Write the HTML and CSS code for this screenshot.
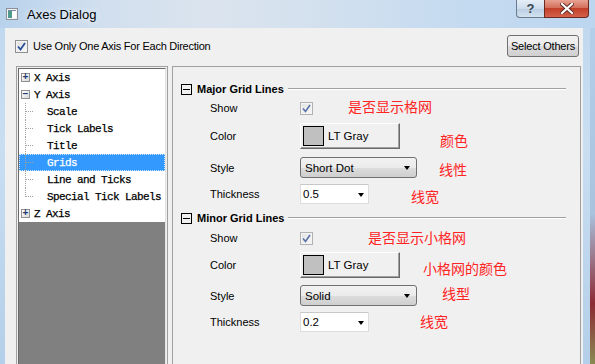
FILE: index.html
```html
<!DOCTYPE HTML>
<html>
<head>
<link rel="stylesheet" href="styles.css">
</head>
<body>
<div class="window">
  <div class="titlebar">
    <svg class="app-icon" width="12" height="12" viewBox="0 0 12 12">
      <rect x="0.5" y="0.5" width="11" height="11" fill="#f4f4f4" stroke="#8a9099"/>
      <rect x="2" y="2" width="4" height="8" fill="#4f9a8c"/>
      <rect x="6" y="2" width="4" height="8" fill="#ffffff"/>
      <rect x="2" y="2" width="8" height="1" fill="#7a8aa0"/>
    </svg>
    <span class="title">Axes Dialog</span>
    <div class="caption-buttons">
      <div class="cap-btn help">?</div>
      <div class="cap-btn close">
        <svg width="14" height="11" viewBox="0 0 14 11">
          <path d="M2 1 L12 10 M12 1 L2 10" stroke="#5a2a22" stroke-width="4" stroke-linecap="square"/>
          <path d="M2 1 L12 10 M12 1 L2 10" stroke="#ffffff" stroke-width="2.2" stroke-linecap="square"/>
        </svg>
      </div>
    </div>
  </div>
  <div class="frame-row">
    <div class="client">
      <div class="top-row">
        <div class="check-label">
          <span class="checkbox"><svg width="9" height="9" viewBox="0 0 9 9"><path d="M1 4.5 L3.5 7.5 L8 1" fill="none" stroke="#2a4f9a" stroke-width="1.8"/></svg></span>
          Use Only One Axis For Each Direction
        </div>
        <div class="btn">Select Others</div>
      </div>
      <div class="panels">
        <div class="tree">
          <div class="tree-inner">
            <div class="tree-items">
              <div class="node"><span class="expander">+</span>X Axis</div>
              <div class="node"><span class="expander">&minus;</span>Y Axis</div>
              <div class="leaf">Scale</div>
              <div class="leaf">Tick Labels</div>
              <div class="leaf">Title</div>
              <div class="leaf selected">Grids</div>
              <div class="leaf">Line and Ticks</div>
              <div class="leaf last">Special Tick Labels</div>
              <div class="node"><span class="expander">+</span>Z Axis</div>
            </div>
          </div>
        </div>
        <div class="props">
          <div class="group">
            <div class="group-head">
              <span class="collapse"></span>
              <span class="group-title">Major Grid Lines</span>
              <span class="group-line"></span>
            </div>
            <div class="row row-check">
              <span class="label">Show</span>
              <span class="checkbox disabled"><svg width="9" height="9" viewBox="0 0 9 9"><path d="M1 4.5 L3.5 7.5 L8 1" fill="none" stroke="#5a73a8" stroke-width="1.6"/></svg></span>
              <span class="note note-show1">是否显示格网</span>
            </div>
            <div class="row row-color">
              <span class="label">Color</span>
              <div class="color-btn"><span class="swatch"></span>LT Gray</div>
              <span class="note note-color1">颜色</span>
            </div>
            <div class="row row-style">
              <span class="label">Style</span>
              <div class="dropdown">Short Dot<span class="arrow"></span></div>
              <span class="note note-style1">线性</span>
            </div>
            <div class="row row-thick">
              <span class="label">Thickness</span>
              <div class="combo">0.5<span class="arrow"></span></div>
              <span class="note note-thick1">线宽</span>
            </div>
          </div>
          <div class="group group-minor">
            <div class="group-head">
              <span class="collapse"></span>
              <span class="group-title">Minor Grid Lines</span>
              <span class="group-line"></span>
            </div>
            <div class="row row-check">
              <span class="label">Show</span>
              <span class="checkbox disabled"><svg width="9" height="9" viewBox="0 0 9 9"><path d="M1 4.5 L3.5 7.5 L8 1" fill="none" stroke="#5a73a8" stroke-width="1.6"/></svg></span>
              <span class="note note-show2">是否显示小格网</span>
            </div>
            <div class="row row-color">
              <span class="label">Color</span>
              <div class="color-btn"><span class="swatch"></span>LT Gray</div>
              <span class="note note-color2">小格网的颜色</span>
            </div>
            <div class="row row-style">
              <span class="label">Style</span>
              <div class="dropdown">Solid<span class="arrow"></span></div>
              <span class="note note-style2">线型</span>
            </div>
            <div class="row row-thick">
              <span class="label">Thickness</span>
              <div class="combo">0.2<span class="arrow"></span></div>
              <span class="note note-thick2">线宽</span>
            </div>
          </div>
        </div>
      </div>
    </div>
    <div class="frame-right"></div>
    <div class="desktop"></div>
  </div>
</div>
</body>
</html>
```

FILE: styles.css
```css
body {
  margin: 0;
  overflow: hidden;
  font-family: "Liberation Sans", Arial, sans-serif;
  font-size: 11px;
  color: #000;
}
.window {
  width: 595px;
  height: 364px;
  background: linear-gradient(to bottom, #bfd7ee, #c9def1 40%, #b4cfe9);
  display: flex;
  flex-direction: column;
  overflow: hidden;
}

/* title bar */
.titlebar {
  height: 28px;
  flex-shrink: 0;
  display: flex;
  align-items: center;
  padding-left: 6px;
  background: linear-gradient(to right, #b8d2ec 0%, #cfdeee 15%, #dbe4ee 35%, #d2e0ee 55%, #c6dbf0 75%, #bcd6f0 100%);
  position: relative;
}
.app-icon {
  margin-top: -1px;
}
.title {
  margin-left: 9px;
  font-size: 13px;
  color: #000;
  text-shadow: 0 0 6px #fff;
}
.caption-buttons {
  position: absolute;
  top: 0;
  right: 6px;
  display: flex;
}
.cap-btn {
  height: 18px;
  box-sizing: border-box;
  display: flex;
  align-items: center;
  justify-content: center;
}
.help {
  width: 28px;
  border: 1px solid #6b7a8d;
  border-top: none;
  border-right: none;
  border-bottom-left-radius: 4px;
  background: linear-gradient(to bottom, #e6eef7, #cddced 50%, #b9cde2 51%, #d2e2f1);
  font-size: 13px;
  font-weight: bold;
  color: #3b4450;
}
.close {
  width: 45px;
  border: 1px solid #6a2a22;
  border-top: none;
  border-bottom-right-radius: 4px;
  background: linear-gradient(to bottom, #e8a293, #d4705c 45%, #c2402a 50%, #d3624c);
}

.frame-row {
  flex: 1;
  min-height: 0;
  display: flex;
}
.client {
  margin-left: 5px;
  width: 578px;
  background: #f0f0f0;
  padding: 7px 0 0 10px;
  box-sizing: border-box;
  overflow: hidden;
}
.frame-right {
  width: 7px;
}
.desktop {
  width: 5px;
  background: linear-gradient(to bottom, #b4cfe9 0%, #a9c3df 55%, #8c2a34 82%, #8a8a52 100%);
}

.top-row {
  height: 22px;
  display: flex;
  align-items: center;
  justify-content: space-between;
  margin-right: 4px;
}
.check-label {
  display: flex;
  align-items: center;
  font-size: 11px;
  letter-spacing: -0.25px;
}
.checkbox {
  width: 13px;
  height: 13px;
  box-sizing: border-box;
  border: 1px solid #8e8f8f;
  background: linear-gradient(135deg, #dcdcdc, #fbfbfb);
  box-shadow: inset 0 0 0 1px #f4f4f4;
  display: inline-flex;
  align-items: center;
  justify-content: center;
  margin-right: 5px;
}
.checkbox.disabled {
  border-color: #b1b1b1;
  background: linear-gradient(135deg, #e3e3e3, #f7f7f7);
}
.btn {
  width: 72px;
  height: 22px;
  box-sizing: border-box;
  border: 1px solid #707070;
  border-radius: 3px;
  background: linear-gradient(to bottom, #f2f2f2, #ebebeb 50%, #dddddd 51%, #cfcfcf);
  display: flex;
  align-items: center;
  justify-content: center;
  font-size: 11px;
  letter-spacing: -0.2px;
}

.panels {
  margin: 9px 2px 0 1px;
  display: flex;
  gap: 4px;
}

/* tree */
.tree {
  width: 152px;
  height: 310px;
  box-sizing: border-box;
  border: 1px solid #a0a0a0;
  padding: 1px;
}
.tree-inner {
  height: 100%;
  box-sizing: border-box;
  border: 1px solid #696969;
  border-right-color: #e3e3e3;
  border-bottom-color: #e3e3e3;
  background: #808080;
}
.tree-items {
  background: #fff;
  font-family: "Liberation Mono", "Courier New", monospace;
  font-size: 11px;
  letter-spacing: -0.6px;
  color: #000;
  -webkit-text-stroke: 0.25px #000;
}
.node, .leaf {
  height: 17px;
  display: flex;
  align-items: center;
  white-space: nowrap;
}
.node {
  padding-left: 2px;
}
.expander {
  width: 9px;
  height: 9px;
  box-sizing: border-box;
  border: 1px solid #919191;
  background: linear-gradient(135deg, #ffffff, #d8d8d8);
  color: #1e3a70;
  font-family: "Liberation Sans", Arial, sans-serif;
  font-size: 10px;
  font-weight: bold;
  line-height: 6px;
  letter-spacing: 0;
  -webkit-text-stroke: 0;
  display: inline-flex;
  justify-content: center;
  margin-right: 4px;
}
.leaf {
  position: relative;
  padding-left: 28px;
}
.leaf::before {
  content: "";
  position: absolute;
  left: 6px;
  top: 0;
  height: 100%;
  border-left: 1px dotted #a0a0a0;
}
.leaf.last::before {
  height: 9px;
}
.leaf::after {
  content: "";
  position: absolute;
  left: 7px;
  top: 8px;
  width: 7px;
  border-top: 1px dotted #a0a0a0;
}
.leaf.selected {
  background: #3399ff;
  color: #fff;
  -webkit-text-stroke: 0.25px #fff;
  outline: 1px dotted #cfe6ff;
  outline-offset: -1px;
}

/* properties */
.props {
  width: 409px;
  height: 310px;
  box-sizing: border-box;
  border: 1px solid #a0a0a0;
  padding: 15px 0 0 8px;
}
.group-head {
  height: 14px;
  display: flex;
  align-items: center;
}
.collapse {
  width: 11px;
  height: 11px;
  box-sizing: border-box;
  border: 1px solid #000;
  position: relative;
  margin-right: 5px;
}
.collapse::after {
  content: "";
  position: absolute;
  left: 1px;
  right: 1px;
  top: 4px;
  border-top: 1px solid #000;
}
.group-title {
  font-weight: bold;
  font-size: 11px;
}
.group-line {
  flex: 1;
  margin: 0 14px 0 4px;
  border-top: 1px solid #a0a0a0;
  border-bottom: 1px solid #fff;
}
.group-minor {
  margin-top: 7px;
}
.row {
  display: flex;
  align-items: center;
  padding-left: 29px;
}
.label {
  width: 90px;
}
.row-check { height: 14px; margin-top: 5px; }
.row-color { height: 26px; margin-top: 8px; }
.row-style { height: 21px; margin-top: 8px; }
.row-thick { height: 20px; margin-top: 6px; }
.group-minor .row-check { margin-top: 6px; }
.group-minor .row-color { margin-top: 7px; }
.group-minor .row-style { margin-top: 7px; }

.row .checkbox {
  margin-right: 0;
}
.color-btn {
  width: 100px;
  height: 26px;
  box-sizing: border-box;
  border: 1px solid;
  border-color: #fff #696969 #696969 #fff;
  box-shadow: inset -1px -1px 0 #a0a0a0;
  background: #f0f0f0;
  display: flex;
  align-items: center;
  padding-left: 2px;
  font-size: 11.5px;
}
.swatch {
  width: 21px;
  height: 20px;
  box-sizing: border-box;
  border: 1px solid #000;
  background: #c0c0c0;
  margin-right: 4px;
}
.dropdown {
  width: 117px;
  height: 21px;
  box-sizing: border-box;
  border: 1px solid #707070;
  border-radius: 3px;
  background: linear-gradient(to bottom, #f2f2f2, #ebebeb 50%, #dddddd 51%, #cfcfcf);
  display: flex;
  align-items: center;
  padding-left: 4px;
  font-size: 11.5px;
  position: relative;
}
.combo {
  width: 69px;
  height: 20px;
  box-sizing: border-box;
  border: 1px solid #dcdcdc;
  border-top-color: #c8c8c8;
  background: #fff;
  display: flex;
  align-items: center;
  padding-left: 2px;
  font-size: 11.5px;
  position: relative;
}
.arrow {
  position: absolute;
  right: 6px;
  top: 8px;
  width: 0;
  height: 0;
  border-left: 3.5px solid transparent;
  border-right: 3.5px solid transparent;
  border-top: 4px solid #000;
}
.combo .arrow {
  right: 4px;
}
.note {
  font-family: "Noto Sans CJK SC", sans-serif;
  font-size: 14px;
  line-height: 16px;
  color: #ff2424;
}
.note-show1 { margin-left: 35px; margin-top: -4px; }
.note-color1 { margin-left: 40px; margin-top: 8px; }
.note-style1 { margin-left: 22px; margin-top: 2px; }
.note-thick1 { margin-left: 42px; margin-top: 4px; }
.note-show2 { margin-left: 55px; margin-top: -2px; }
.note-color2 { margin-left: 23px; margin-top: 6px; }
.note-style2 { margin-left: 25px; margin-top: -5px; }
.note-thick2 { margin-left: 51px; margin-top: -2px; }
```
